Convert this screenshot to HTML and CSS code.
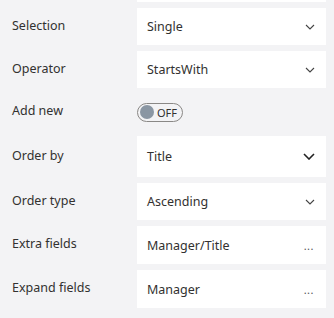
FILE: index.html
```html
<!DOCTYPE html>
<html lang="en">
<head>
  <meta charset="UTF-8">
  <title>Property pane</title>
  <link rel="stylesheet" href="styles.css">
</head>
<body>
  <div class="pane">
    <div class="row">
      <label></label>
      <div class="field"></div>
    </div>

    <div class="row">
      <label>Selection</label>
      <div class="field">
        <span>Single</span>
        <svg class="chev" viewBox="0 0 10 6"><path d="M1 1l4 4 4-4"/></svg>
      </div>
    </div>

    <div class="row">
      <label>Operator</label>
      <div class="field">
        <span>StartsWith</span>
        <svg class="chev" viewBox="0 0 10 6"><path d="M1 1l4 4 4-4"/></svg>
      </div>
    </div>

    <div class="row row-toggle">
      <label>Add new</label>
      <div class="toggle">
        <span class="knob"></span>
        <span class="toggle-text">OFF</span>
      </div>
    </div>

    <div class="row row-tall">
      <label>Order by</label>
      <div class="field">
        <span>Title</span>
        <svg class="chev chev-big" viewBox="0 0 12 7"><path d="M1 1l5 5 5-5"/></svg>
      </div>
    </div>

    <div class="row">
      <label>Order type</label>
      <div class="field">
        <span>Ascending</span>
        <svg class="chev" viewBox="0 0 10 6"><path d="M1 1l4 4 4-4"/></svg>
      </div>
    </div>

    <div class="row row-38">
      <label>Extra fields</label>
      <div class="field">
        <span>Manager/Title</span>
        <span class="more">...</span>
      </div>
    </div>

    <div class="row row-38">
      <label>Expand fields</label>
      <div class="field">
        <span>Manager</span>
        <span class="more">...</span>
      </div>
    </div>
  </div>
</body>
</html>
```

FILE: styles.css
```css
body { margin: 0; background: #f3f3f5; font-family: "Noto Sans", "Open Sans", sans-serif; color: #323130; }
.pane { margin-top: -35px; padding: 0 8px 0 12px; display: flex; flex-direction: column; gap: 6px; }
.row { display: grid; grid-template-columns: 125px 1fr; align-items: center; height: 37px; }
.row-toggle { height: 36px; }
.row-tall { height: 41px; }
.row-38 { height: 38px; }
label { font-size: 12.5px; margin-top: -3px; }
.field { background: #fff; height: 100%; display: flex; align-items: center; justify-content: space-between; padding: 0 10px; font-size: 12.5px; box-sizing: border-box; }
.chev { width: 10px; height: 6px; fill: none; stroke: #444; stroke-width: 1.1; margin-right: 1px; }
.chev-big { width: 12px; height: 7px; stroke: #222; stroke-width: 1.6; }
.more { font-size: 11px; color: #555; letter-spacing: 0.5px; margin-right: 2px; }
.toggle { width: 46px; height: 19px; box-sizing: border-box; border: 1px solid #8a8886; border-radius: 10px; display: flex; align-items: center; gap: 3px; padding-left: 2px; }
.knob { width: 14px; height: 14px; border-radius: 50%; background: #8a96a3; }
.toggle-text { font-size: 11px; color: #323130; }
```
